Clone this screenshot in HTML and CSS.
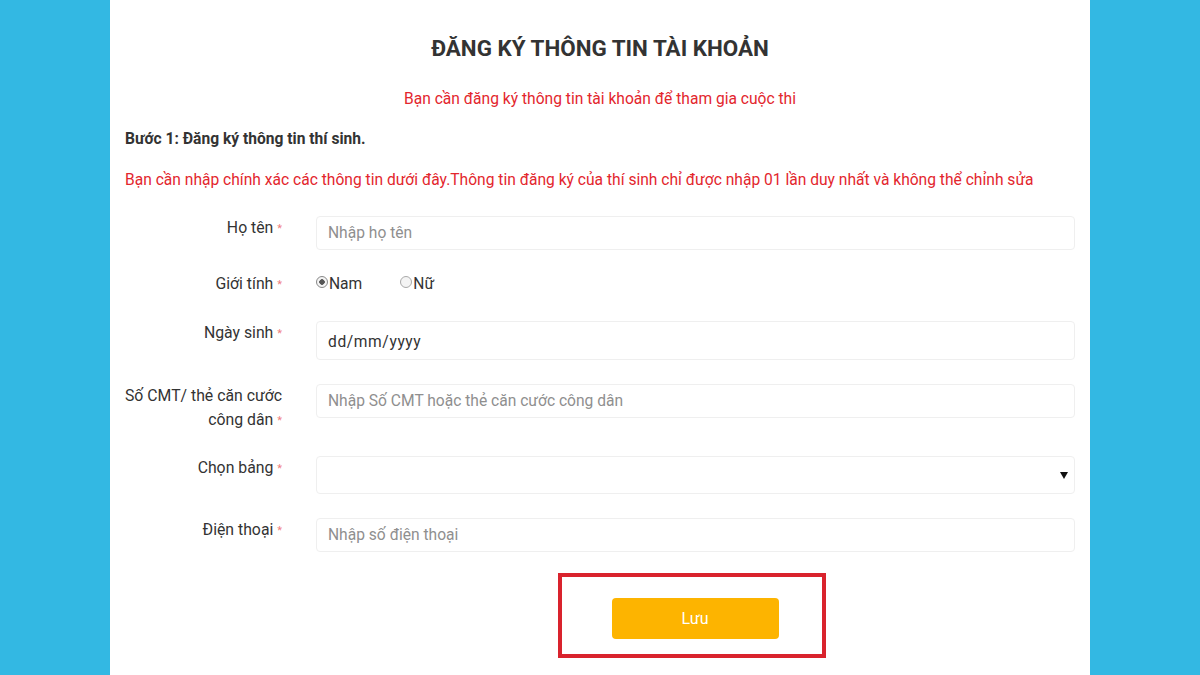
FILE: index.html
```html
<!DOCTYPE html>
<html lang="vi">
<head>
<meta charset="utf-8">
<title>Đăng ký thông tin tài khoản</title>
<link rel="stylesheet" href="styles.css">
</head>
<body>
<div class="panel">
  <h1 class="title">ĐĂNG KÝ THÔNG TIN TÀI KHOẢN</h1>
  <p class="subtitle">Bạn cần đăng ký thông tin tài khoản để tham gia cuộc thi</p>
  <p class="step">Bước 1: Đăng ký thông tin thí sinh.</p>
  <p class="note">Bạn cần nhập chính xác các thông tin dưới đây.Thông tin đăng ký của thí sinh chỉ được nhập 01 lần duy nhất và không thể chỉnh sửa</p>

  <form class="form">
    <div class="row">
      <label class="label">Họ tên <span class="req">*</span></label>
      <input class="field" type="text" placeholder="Nhập họ tên">
    </div>
    <div class="row row-radio">
      <label class="label">Giới tính <span class="req">*</span></label>
      <div class="radios">
        <span class="radio"><span class="dot checked"></span>Nam</span>
        <span class="radio"><span class="dot"></span>Nữ</span>
      </div>
    </div>
    <div class="row">
      <label class="label">Ngày sinh <span class="req">*</span></label>
      <input class="field field-date" type="text" value="dd/mm/yyyy">
    </div>
    <div class="row row-cmt">
      <label class="label">Số CMT/ thẻ căn cước<br>công dân <span class="req">*</span></label>
      <input class="field" type="text" placeholder="Nhập Số CMT hoặc thẻ căn cước công dân">
    </div>
    <div class="row">
      <label class="label">Chọn bảng <span class="req">*</span></label>
      <div class="field field-select">
        <svg class="caret" width="8" height="7" viewBox="0 0 8 7"><path d="M0 0H8L4 7Z" fill="#111"/></svg>
      </div>
    </div>
    <div class="row">
      <label class="label">Điện thoại <span class="req">*</span></label>
      <input class="field" type="text" placeholder="Nhập số điện thoại">
    </div>
    <div class="row row-submit">
      <span class="label"></span>
      <div class="submit-area">
        <div class="highlight">
          <button class="btn" type="button">Lưu</button>
        </div>
      </div>
    </div>
  </form>
</div>
</body>
</html>
```

FILE: styles.css
```css
* { box-sizing: border-box; }
html, body { margin: 0; padding: 0; }
body {
  background: #33b8e3;
  font-family: Roboto, "Liberation Sans", Arial, sans-serif;
  color: #333;
}
.panel {
  width: 980px;
  margin: 0 auto;
  min-height: 675px;
  background: #fff;
  padding: 35px 15px 0;
}
.title {
  margin: 0;
  text-align: center;
  font-size: 22.4px;
  line-height: 26px;
  font-weight: 700;
  color: #333;
}
.subtitle {
  margin: 28px 0 0;
  text-align: center;
  font-size: 15.6px;
  line-height: 20px;
  color: #e3262d;
}
.step {
  margin: 20px 0 0;
  font-size: 15.6px;
  line-height: 20px;
  font-weight: 700;
  color: #333;
}
.note {
  margin: 21px 0 0;
  font-size: 15.6px;
  line-height: 20px;
  color: #e3262d;
}
.form {
  margin-top: 26px;
  display: flex;
  flex-direction: column;
  gap: 24px;
}
.row {
  display: flex;
  align-items: flex-start;
}
.label {
  width: 176px;
  flex: none;
  margin-left: -10px;
  padding-right: 9px;
  margin-right: 25px;
  text-align: right;
  white-space: nowrap;
  font-size: 15.8px;
  line-height: 24px;
  color: #333;
}
.req {
  color: #f08080;
  font-size: 11px;
  vertical-align: 1px;
}
.field {
  flex: 1;
  height: 34px;
  border: 1px solid #efefef;
  border-radius: 4px;
  background: #fff;
  padding: 0 11px;
  font-family: Roboto, "Liberation Sans", Arial, sans-serif;
  font-size: 15.6px;
  color: #333;
  outline: none;
}
.field::placeholder { color: #8f8f8f; }
.field-date {
  height: 39px;
  letter-spacing: 0.6px;
  color: #333;
  padding-top: 3px;
}
.field-select {
  height: 38px;
  display: flex;
  align-items: center;
  justify-content: flex-end;
  padding-right: 6px;
}
.caret { display: block; }
.row-radio { margin: -2px 0 0; }
.row-cmt { margin-bottom: -1px; }
.radios {
  display: flex;
  gap: 38px;
  font-size: 15.6px;
  line-height: 24px;
  color: #333;
}
.radio {
  display: flex;
  align-items: center;
}
.dot {
  width: 12px;
  height: 12px;
  border: 1px solid #a9a9a9;
  border-radius: 50%;
  background: #f4f4f4;
  margin-right: 1px;
  position: relative;
  top: -2px;
}
.dot.checked {
  background: radial-gradient(circle, #555 0 2.5px, #f4f4f4 3px);
  border-color: #888;
}
.row-submit { margin-top: -3px; }
.submit-area {
  flex: 1;
  display: flex;
  justify-content: center;
  padding-right: 7px;
}
.highlight {
  width: 268px;
  height: 85px;
  border: 4px solid #d9232d;
  display: flex;
  justify-content: center;
  padding: 21px 0 0 6px;
}
.btn {
  width: 167px;
  height: 41px;
  border: none;
  border-radius: 4px;
  background: #fdb400;
  color: #fff;
  font-family: Roboto, "Liberation Sans", Arial, sans-serif;
  font-size: 16px;
  font-weight: 400;
}
```
